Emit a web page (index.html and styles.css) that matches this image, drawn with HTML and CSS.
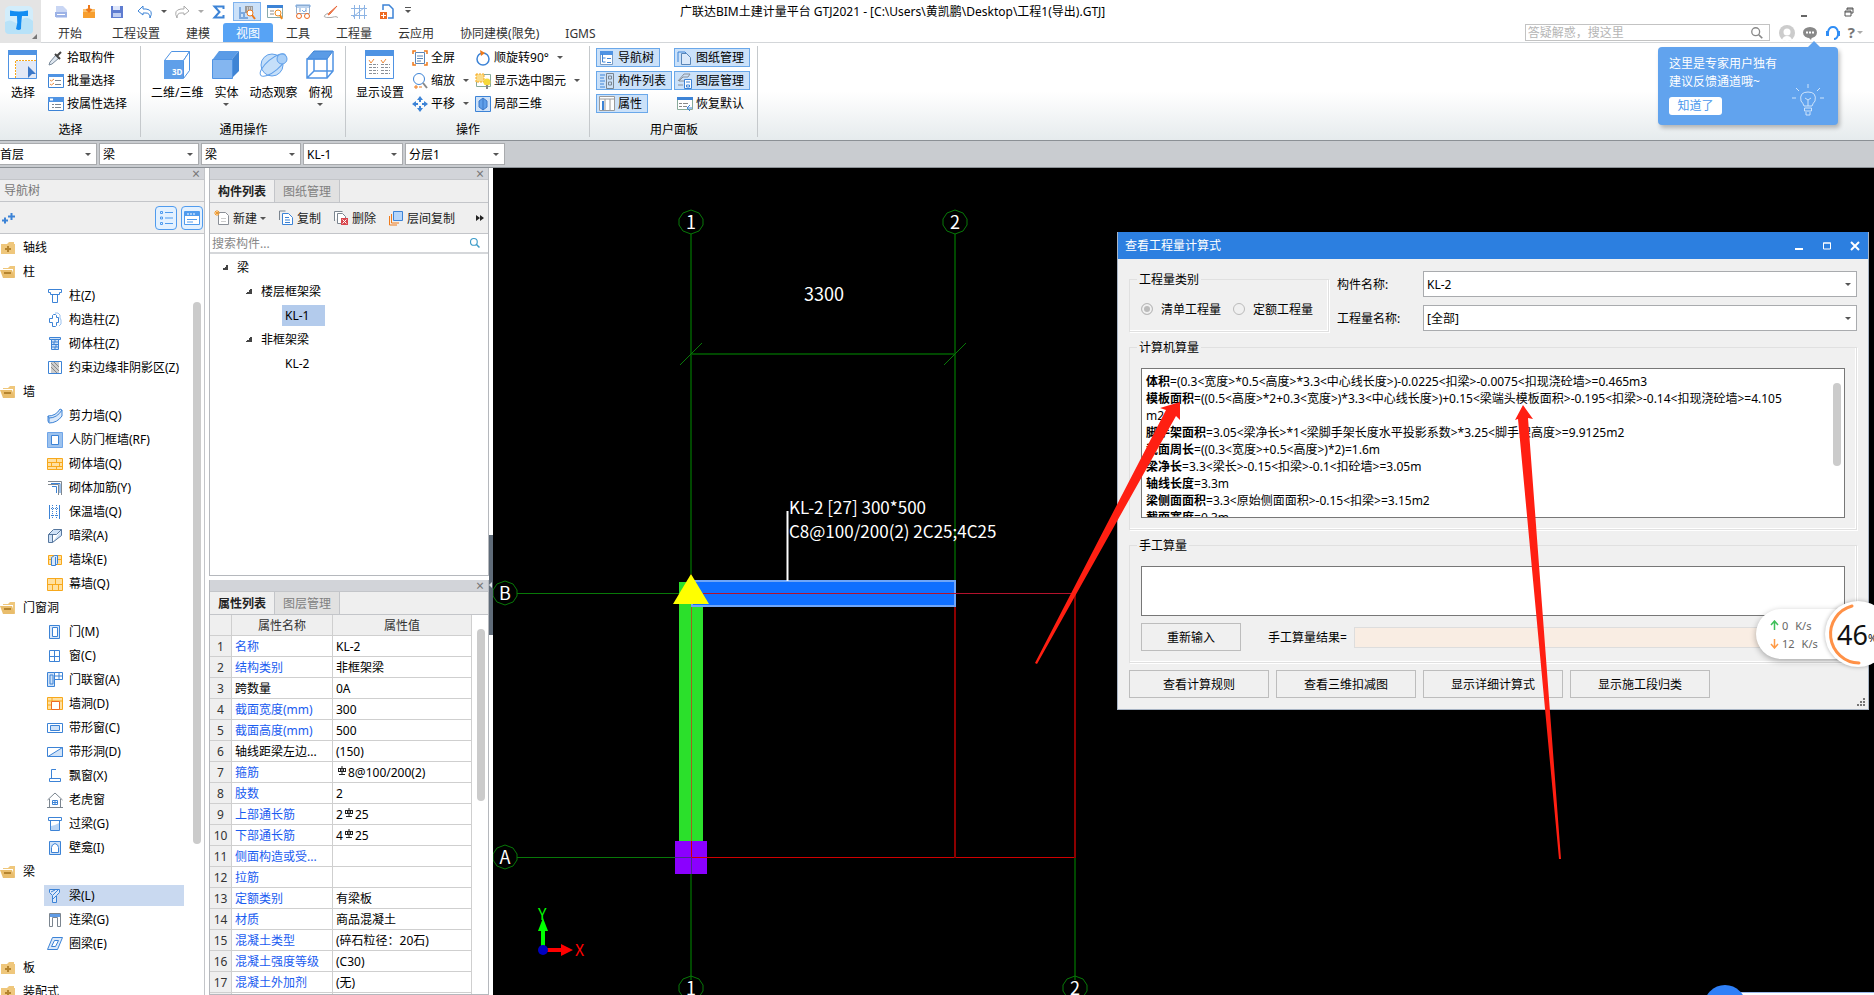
FILE: index.html
```html
<!DOCTYPE html>
<html lang="zh-CN">
  <head>
    <meta charset="UTF-8" />
    <meta name="viewport" content="width=device-width, initial-scale=1.0" />
    <title>广联达BIM土建计量平台 GTJ2021</title>
    <link rel="stylesheet" href="styles.css">
  </head>
  <body>
    <!-- shared icons -->
    <svg class="defs" aria-hidden="true">
      <symbol id="i-plus-folder" viewBox="0 0 16 16"><path d="M1 4h6l2-2h5v2h1v10H1z" fill="#efc77c"/><path d="M5 9h6M8 6v6" stroke="#b5842f" stroke-width="2"/></symbol>
      <symbol id="i-open-folder" viewBox="0 0 16 16"><path d="M3 4h5l2-2h5v11h-2V5H3z" fill="#efc77c"/><path d="M0 6h12l3 8H3z" fill="#e9bd6c"/><path d="M4 9h7" stroke="#b5842f" stroke-width="2"/></symbol>
      <symbol id="i-column" viewBox="0 0 16 16"><path d="M1.500 1.500h13v3h-2v2h-9v-2h-2zM5.500 6.500v8h5v-8" fill="#fff" stroke="#3c83d6"/></symbol>
      <symbol id="i-struct" viewBox="0 0 16 16"><path d="M8 1h3l2 2v3l1 2v4l-2 2" fill="none" stroke="#9cc2ee"/><path d="M5.500 3.500l1-1h2l1 1v2h2v5h-2v3l-1 1h-3v-4h-3v-4h3z" fill="#fff" stroke="#3c83d6"/></symbol>
      <symbol id="i-brickcol" viewBox="0 0 16 16"><path d="M2.500 1.500h11v2h-11z" fill="#cfe2f8" stroke="#3c83d6"/><path d="M4.500 3.500h7v10h-7zM4.500 6h7M4.500 8.500h7M4.500 11h7M8 4v2M7 6v3M9 8v3M8 11v3" fill="#cfe2f8" stroke="#3c83d6"/></symbol>
      <symbol id="i-shade" viewBox="0 0 16 16"><path d="M1.500 1.500h13v12h-13z" fill="#fff" stroke="#3c83d6"/><path d="M4 2h8v11H4z" fill="#ccc"/><path d="M4 3l8 8M4 7l6 6M7 2l5 5" stroke="#888"/></symbol>
      <symbol id="i-curved" viewBox="0 0 16 16"><path d="M1 8q8 0 12-7l2 1v6q-5 7-13 7l-1-2z" fill="#dbe9fa" stroke="#3c83d6"/><path d="M2 10q8 0 13-8M1 8l1 2v4" fill="none" stroke="#3c83d6"/></symbol>
      <symbol id="i-frame" viewBox="0 0 16 16"><path d="M.5.500h15v15H.5z" fill="#9cc2ee" stroke="#6fa5e8"/><path d="M4.500 3.500h7v9h-7z" fill="#fff" stroke="#3c83d6"/></symbol>
      <symbol id="i-brick" viewBox="0 0 16 16"><path d="M.5 2.500h15v11H.5zM0 6.500h16M0 10.500h16M9.500 2v4M4.500 6v4M12.500 6v4M9.500 10v4" fill="#ffe0a0" stroke="#f7a81b"/></symbol>
      <symbol id="i-rebar" viewBox="0 0 16 16"><path d="M1 1.500h13.500V15M1 4.500h10.500V15" fill="none" stroke="#808890"/><path d="M4 3.500h9V13M5 6.500h4.500V13" fill="none" stroke="#3c83d6"/></symbol>
      <symbol id="i-insul" viewBox="0 0 16 16"><path d="M2.500 1v14M12.500 1v14" stroke="#3c83d6"/><path d="M5.500 1v14M9.500 1v14M2 4.500h11M2 11.500h11" stroke="#3c83d6" stroke-dasharray="1 1"/></symbol>
      <symbol id="i-hidbeam" viewBox="0 0 16 16"><path d="M1.500 6.500l5-5h8l-5 5zM1.500 6.500v8h4v-8M5.500 14.500l9-7v-6" fill="#cfe2f8" stroke="#56779e"/></symbol>
      <symbol id="i-pier" viewBox="0 0 16 16"><path d="M1.500 3.500h13v9h-13zM2 7.500h12" fill="#ffe0a0" stroke="#f7a81b"/><path d="M4.500 5.500l3-2h3v8l-2 2h-4zM8.500 5v8" fill="#dbe9fa" stroke="#3c83d6"/></symbol>
      <symbol id="i-curtain" viewBox="0 0 16 16"><path d="M.5 2.500h15v12H.5zM0 8.500h16M8.500 2v6M5.500 8v6M11.500 8v6" fill="#ffe0a0" stroke="#f7a81b"/></symbol>
      <symbol id="i-door" viewBox="0 0 16 16"><path d="M2.500 1.500h10v13h-10z" fill="#dbe9fa" stroke="#3c83d6"/><path d="M5.500 3.500h5v9h-5z" fill="#fff" stroke="#3c83d6"/></symbol>
      <symbol id="i-window" viewBox="0 0 16 16"><path d="M2.500 2.500h10v11h-10zM2 8.500h11M7.500 2v12" fill="#fff" stroke="#3c83d6"/></symbol>
      <symbol id="i-doorwin" viewBox="0 0 16 16"><path d="M.5.500h7v14h-7zM3 3h3v9H3z" fill="#cfe2f8" stroke="#3c83d6"/><path d="M7.500.5h8v7h-8zM8 4h8M12 1v6" fill="#fff" stroke="#3c83d6"/></symbol>
      <symbol id="i-hole" viewBox="0 0 16 16"><path d="M.5 1.500h15v12H.5zM0 5h16M5 2v3M0 9h5" fill="#ffe0a0" stroke="#f7a81b"/><path d="M4.500 5.500h8v8h-8z" fill="#fff" stroke="#ee6a22"/></symbol>
      <symbol id="i-stripwin" viewBox="0 0 16 16"><path d="M.5 3.500h15v9H.5z" fill="#fff" stroke="#3c83d6"/><path d="M3.500 5.500h9v5h-9z" fill="#cfe2f8" stroke="#3c83d6"/></symbol>
      <symbol id="i-striphole" viewBox="0 0 16 16"><path d="M.5 3.500h15v9H.5z" fill="#fff" stroke="#3c83d6"/><path d="M1 12.500h14.500v-9z" fill="#cfe2f8" stroke="#3c83d6"/></symbol>
      <symbol id="i-bay" viewBox="0 0 16 16"><path d="M9 1.500H4.500v9M2.500 10.500h11v3h-11z" fill="none" stroke="#3c83d6"/></symbol>
      <symbol id="i-house" viewBox="0 0 16 16"><path d="M.5 8L8 1l7.500 7M2.500 7v8M13.500 7v8M0 15.500h16" fill="none" stroke="#7b858f"/><path d="M5.500 8.500h5v4h-5zM8 8v5M5 10.500h6" fill="none" stroke="#3c83d6"/></symbol>
      <symbol id="i-lintel" viewBox="0 0 16 16"><path d="M1.500 1.500h13v3h-13zM3.500 4.500v10h9v-10" fill="#fff" stroke="#3c83d6"/><path d="M4 14v-4l4-1 4-2v7z" fill="#b9d4f4"/></symbol>
      <symbol id="i-niche" viewBox="0 0 16 16"><path d="M2.500 1.500h11v13h-11z" fill="#cfe2f8" stroke="#3c83d6"/><path d="M4.500 12.500v-5q0-3 3.500-4 3.500 1 3.500 4v5z" fill="#fff" stroke="#3c83d6"/></symbol>
      <symbol id="i-beam" viewBox="0 0 16 16"><path d="M2.500 1.500h10v3l-3 3v7h-4v-7l-3-3z" fill="#dbe9fa" stroke="#3c83d6"/><path d="M4 4l4-2M6 7l5-5M6 11l3-3" stroke="#3c83d6"/></symbol>
      <symbol id="i-linkbeam" viewBox="0 0 16 16"><path d="M2.500 1.500h11v13h-3v-9h-5v9h-3z" fill="#fff" stroke="#7b858f"/><path d="M3 2h10v3H3z" fill="#5f9be5"/></symbol>
      <symbol id="i-ring" viewBox="0 0 16 16"><path d="M5.500 1.500h10l-5 12H.5z" fill="#dbe9fa" stroke="#3c83d6"/><path d="M7.500 4.500h4l-3 6h-4z" fill="#fff" stroke="#3c83d6"/></symbol>
      <symbol id="i-lens" viewBox="0 0 16 16"><circle cx="6.500" cy="6.500" r="4.500" fill="none" stroke="currentColor" stroke-width="1.500"/><path d="M10 10l4 4" stroke="currentColor" stroke-width="2"/></symbol>
      <symbol id="i-rebarmark" viewBox="0 0 10 10"><path d="M1 2.500h8M1 5.500h8M1.500 2v4M3.500 2v4M6.500 2v4M8.500 2v4M5 0v8M2 8.500h6" fill="none" stroke="#222" stroke-width="1"/></symbol>
      <symbol id="i-list" viewBox="0 0 16 16"><path d="M.5 1.500h15v13H.5z" fill="#fff" stroke="#3c83d6"/><path d="M0 1h16v3H0z" fill="#4f93e3"/><path d="M2 7l1.500 1L6 6M2 11l1.500 1L6 10" fill="none" stroke="#ee8a3a"/><path d="M7 7.500h6M7 11.500h6" stroke="#7b858f"/></symbol>
      <symbol id="i-panel" viewBox="0 0 16 16"><path d="M1.500 1.500h12v13h-12z" fill="#fff" stroke="#7b9cc4"/><path d="M1 1h13v4H1z" fill="#4f93e3"/><path d="M3.500 4v8h3M3.500 8h3M8 8.500h4M8 12.500h4" fill="none" stroke="#3c83d6"/></symbol>
      <symbol id="i-pages" viewBox="0 0 16 16"><path d="M1.500 10v-9h6" fill="none" stroke="#7b858f"/><path d="M4.500 3.500h6l4 4v7h-10z" fill="#fff" stroke="#3c83d6"/><path d="M7 7.500h4M7 10h5M7 12.500h5" stroke="#3c83d6"/></symbol>
    </svg>

    <header class="app-header">
      <button class="logo" aria-label="应用菜单">
        <svg width="36" height="36" viewBox="0 0 36 36"><rect x="2" y="2" width="28" height="28" rx="5" fill="#d2edfb"/><path d="M2 18q5-3 9 0t8-2 11 1v9q0 4-4 4H6q-4 0-4-4z" fill="#b8e2f8"/><path d="M7 6.500q9 2 18 0v5.500h-6q-1 7-1 13-2 2-5 0 2-6 1-13H7z" fill="#148df2"/><path d="M34 30v5h-5z" fill="#777"/></svg>
      </button>
      <div class="title-row">
        <div class="quick">
          <button aria-label="新建文件"><svg width="16" height="16"><path d="M3 2h7l4 4v8H3z" fill="#c9d6f4"/><path d="M2 8h12v5H2z" fill="#9cb2e6"/><path d="M4 10.500h8" stroke="#fff"/></svg></button>
          <button aria-label="打开"><svg width="16" height="16"><path d="M2 5h12v9H2z" fill="#f79e2e"/><path d="M2 5h3l1 2h4l1-2h3v3H2z" fill="#fbc16d"/><path d="M8 1v6M5.500 5L8 7.500 10.500 5" stroke="#ee7a1b" fill="none" stroke-width="2"/></svg></button>
          <button aria-label="保存"><svg width="16" height="16"><path d="M2 2h12v12H2z" fill="#5f7cd0"/><path d="M4 2h7v4H4z" fill="#dfe7fa"/><path d="M4 9h8v4H4z" fill="#c0cef2"/></svg></button>
          <button aria-label="撤销"><svg width="16" height="16"><path d="M6 2L1 7l5 4V9h3q4 0 4 5 4-8-4-9H6z" fill="#fff" stroke="#3c83d6"/></svg></button>
          <button class="more" aria-label="撤销记录"><i class="caret"></i></button>
          <button aria-label="重做"><svg width="16" height="16"><path d="M10 2l5 5-5 4V9H7q-4 0-4 5-4-8 4-9h3z" fill="#fff" stroke="#aaa"/></svg></button>
          <button class="more" aria-label="重做记录"><i class="caret pale"></i></button>
          <button aria-label="汇总计算"><svg width="16" height="16"><path d="M12.500 5V2.500h-9L8.500 8l-5 5.500h9V11" fill="none" stroke="#3c83d6" stroke-width="2"/></svg></button>
          <button class="on" aria-label="查看工程量"><svg width="18" height="16"><path d="M2 3v11h8M2 9h4v4" fill="none" stroke="#7ba8de" stroke-width="2"/><path d="M7 2h8v7H7z" fill="#999"/><path d="M9 4h5M9 6h5" stroke="#fff" stroke-dasharray="1 1"/><circle cx="12" cy="9" r="3" fill="#fff" stroke="#ee7a1b"/><path d="M14 11l3 4" stroke="#ee7a1b" stroke-width="2"/></svg></button>
          <button aria-label="查看计算式"><svg width="16" height="16"><path d="M.5 1.500h15v12H.5z" fill="#fff" stroke="#8aa"/><path d="M0 1h16v3H0z" fill="#3c83d6"/><path d="M3 7h4M3 10h4" stroke="#888"/><circle cx="11" cy="9" r="3" fill="#fff" stroke="#ee8a1b"/><path d="M13 11l2 4" stroke="#ee8a1b" stroke-width="2"/></svg></button>
          <button aria-label="查看钢筋"><svg width="16" height="16"><path d="M1.500 1.500h13v8h-13z" fill="#fff" stroke="#9ab0c8"/><path d="M1 1h14v2H1zM5 4v4M11 4v4M7 6l2 2 2-2" fill="none" stroke="#7ba8de"/><circle cx="4" cy="12" r="2.500" fill="none" stroke="#ee6a22"/><circle cx="12" cy="12" r="2.500" fill="none" stroke="#ee6a22"/></svg></button>
          <button aria-label="编辑"><svg width="16" height="16"><path d="M14 2L7 10l-2 1 1-2z" fill="#f08a5a" stroke="#e8683a"/><path d="M5 9q-9 5 3 4.500 8-2 6 .5" fill="none" stroke="#aaa"/></svg></button>
          <button aria-label="轴网"><svg width="16" height="16"><path d="M3.500 1v14M8.500 1v14M13.500 1v14M0 4.500h16M0 11.500h16M2 13L14 3" stroke="#8db4e4" fill="none"/></svg></button>
          <button aria-label="导出"><svg width="16" height="16"><path d="M4 6V1h6l4 4v9H9" fill="none" stroke="#3c83d6" stroke-width="1.500"/><path d="M1 8h7v7H1z" fill="#ee6a22"/><path d="M2 11.500h5M4.500 9v5" stroke="#fff"/></svg></button>
          <button class="more wide" aria-label="自定义快速访问"><i class="caret barred"></i></button>
        </div>
        <h1>广联达BIM土建计量平台 GTJ2021 - [C:\Users\黄凯鹏\Desktop\工程1(导出).GTJ]</h1>
        <div class="win-btns">
          <button aria-label="最小化"><svg width="8" height="12"><path d="M1 10h6" stroke="#666" stroke-width="2"/></svg></button>
          <button aria-label="还原"><svg width="10" height="12"><path d="M3 4V2h6v5H7M1 5h6v5H1zM1 6h6M3 3h6" fill="none" stroke="#555"/></svg></button>
        </div>
      </div>
      <nav class="tab-row">
        <a href="#start" class="first">开始</a>
        <a href="#settings">工程设置</a>
        <a href="#model">建模</a>
        <a href="#view" class="active">视图</a>
        <a href="#tools">工具</a>
        <a href="#quantity">工程量</a>
        <a href="#cloud">云应用</a>
        <a href="#team">协同建模(限免)</a>
        <a href="#igms">IGMS</a>
        <div class="help">
          <label class="help-search"><input type="text" aria-label="搜索" placeholder="答疑解惑，搜这里"><svg width="14" height="14"><use href="#i-lens"/></svg></label>
          <button aria-label="用户"><svg width="16" height="16"><circle cx="8" cy="8" r="8" fill="#ccc"/><circle cx="8" cy="7" r="3.500" fill="#fff"/><path d="M3 15q1-4 5-4t5 4q-5 2-10 0z" fill="#fff"/></svg></button>
          <button aria-label="反馈"><svg width="16" height="16"><ellipse cx="8" cy="7.500" rx="7" ry="5.500" fill="#888"/><path d="M6 12l3 3 1-3z" fill="#888"/><path d="M4 7.500h8" stroke="#fff" stroke-width="2" stroke-dasharray="2 1"/></svg></button>
          <button aria-label="客服"><svg width="16" height="16"><path d="M3 9V7q1-5 5-5t5 5v3q-1 4-4 4" fill="none" stroke="#2f8df5" stroke-width="2"/><path d="M1 6h3v5H1zM12 6h3v5h-3z" fill="#2f8df5"/></svg></button>
          <button class="q" aria-label="帮助">?<i class="caret pale"></i></button>
        </div>
      </nav>
    </header>

    <section class="ribbon">
      <div class="group g-select">
        <div class="group-body">
          <button class="big"><svg width="30" height="30"><path d="M.5.500h28v28H.5z" fill="#fff" stroke="#4f93e3"/><path d="M0 0h29v5H0z" fill="#4f93e3"/><path d="M8 11h20v17H8z" fill="#e3e9f6"/><path d="M7.500 28V10.500H28" fill="none" stroke="#f7a81b" stroke-dasharray="2 1"/><path d="M20 16l8 8h-4l-4 4z" fill="#3c78c8"/></svg><span>选择</span></button>
          <div class="col">
            <button><svg width="16" height="16"><path d="M8 5l3 3-7 6-3 1 1-3z" fill="#dfe7f0" stroke="#789"/><path d="M7 4l5 5M9 6l4-4" stroke="#444" stroke-width="2"/></svg>拾取构件</button>
            <button><svg width="16" height="16"><use href="#i-list"/></svg>批量选择</button>
            <button><svg width="16" height="16"><path d="M.5 1.500h15v13H.5z" fill="#fff" stroke="#3c83d6"/><path d="M0 1h16v5H0z" fill="#4f93e3"/><path d="M2 3.500h3" stroke="#fff" stroke-width="2"/><path d="M4 8.500h2M4 11.500h2M7 8.500h6M7 11.500h6" stroke="#7b858f"/></svg>按属性选择</button>
          </div>
        </div>
        <p>选择</p>
      </div>
      <div class="group g-common">
        <div class="group-body">
          <button class="big"><svg width="30" height="30"><path d="M2.500 10.500l7-9h18l-6 9z" fill="#fff" stroke="#4f93e3"/><path d="M21.500 10.500l6-9v19l-6 8z" fill="#fff" stroke="#4f93e3"/><path d="M2 10h19v19H2z" fill="#5f9fe9"/><text x="10" y="25" class="cube-text">3D</text></svg><span>二维/三维</span></button>
          <button class="big"><svg width="30" height="30"><path d="M2 9l6-8h20l-7 8z" fill="#5a9be6"/><path d="M21 9l7-8v20l-7 7z" fill="#3f84d4"/><path d="M1.500 9.500h20v19h-20z" fill="#84b6f0" stroke="#4f93e3"/></svg><span>实体</span><i class="caret"></i></button>
          <button class="big"><svg width="30" height="30"><circle cx="14" cy="15" r="11" fill="#c5dff9" stroke="#5f9fe9"/><ellipse cx="15" cy="15" rx="16" ry="6" transform="rotate(-40 15 15)" fill="none" stroke="#5f9fe9"/><circle cx="24" cy="9" r="5" fill="#a9cff7" stroke="#5f9fe9"/></svg><span>动态观察</span></button>
          <button class="big"><svg width="30" height="30"><path d="M2 9l7-8h19l-6 8z" fill="#5a9be6" stroke="#3f84d4"/><path d="M2 9h20v19H2zM22 28l6-7V1M9 9v12h13M2 28l7-7M22 21h6" fill="none" stroke="#4f93e3" stroke-width="1.500"/></svg><span>俯视</span><i class="caret"></i></button>
        </div>
        <p>通用操作</p>
      </div>
      <div class="group g-ops">
        <div class="group-body">
          <button class="big"><svg width="30" height="30"><path d="M.5.500h28v28H.5z" fill="#fff" stroke="#4f93e3"/><path d="M0 0h29v6H0z" fill="#4f93e3"/><path d="M4 10l2 3 3-4M16 10l2 3 3-4" fill="none" stroke="#ee8a3a"/><path d="M4 14.500h9M4 17.500h9M4 20.500h9M4 23.500h9M16 14.500h9M16 17.500h9M16 20.500h9M16 23.500h9" stroke="#8a8f96" stroke-dasharray="3 1"/></svg><span>显示设置</span></button>
          <div class="col c2">
            <button><svg width="16" height="16"><path d="M1 4V1h3M12 1h3v3M15 12v3h-3M4 15H1v-3" fill="none" stroke="#ee7a1b" stroke-width="1.500"/><path d="M3.500 2.500h9v11h-9zM5 6h6M5 8.500h6M5 11h4" fill="#fff" stroke="#5a86b8"/></svg>全屏</button>
            <button><svg width="16" height="16"><circle cx="7" cy="6" r="5.500" fill="#fff" stroke="#3c83d6"/><path d="M11 10l4 5" stroke="#888" stroke-width="2"/><path d="M2 14h4M4 12v4M7 14h3" stroke="#ee7a1b"/></svg>缩放<i class="caret"></i></button>
            <button><svg width="16" height="16"><path d="M8 0l3 4H5zM8 16l3-4H5zM0 8l4-3v6zM16 8l-4-3v6z" fill="#3c83d6"/><path d="M8 3v10M3 8h10" stroke="#3c83d6" stroke-width="2" stroke-dasharray="3 4"/></svg>平移<i class="caret"></i></button>
          </div>
          <div class="col c3">
            <button><svg width="16" height="16"><circle cx="8" cy="9" r="6" fill="none" stroke="#3c83d6" stroke-width="1.500"/><path d="M5 0l5 3-4 3z" fill="#ee7a1b"/></svg>顺旋转90°<i class="caret"></i></button>
            <button><svg width="16" height="16"><path d="M1.500 1.500h14v12h-14z" fill="#fff" stroke="#8a9"/><path d="M1 1h8v8H1z" fill="#fbdc8a" stroke="#f7a81b" stroke-dasharray="2 1"/><circle cx="12" cy="9" r="3.500" fill="#f6d93a"/><path d="M12 12v4" stroke="#888" stroke-width="2"/></svg>显示选中图元<i class="caret"></i></button>
            <button><svg width="16" height="16"><path d="M.5.500h15v15H.5z" fill="#cfe2f8" stroke="#3c83d6"/><path d="M8 2l4 3v6l-4 3-4-3V5zM8 2v12" fill="#5f9fe9" stroke="#3c78c8"/></svg>局部三维</button>
          </div>
        </div>
        <p>操作</p>
      </div>
      <div class="group g-panels">
        <div class="group-body">
          <div class="toggles">
            <button class="on"><svg width="16" height="16"><use href="#i-panel"/></svg>导航树</button>
            <button class="on"><svg width="16" height="16"><path d="M1 2h5M1 5h4M1 8h5M1 11h4M1 14h5" stroke="#3c83d6"/><path d="M7.500.500h7v15h-7zM9.500 3h3v3h-3zM9.500 9h3v3h-3z" fill="none" stroke="#7b858f"/></svg>构件列表</button>
            <button class="on"><svg width="16" height="16"><path d="M.5.500h15v14H.5zM0 3h16M6 3v12M11 3v12" fill="#fff" stroke="#9a9a9a"/><path d="M3 5h2v9H3z" fill="#3c83d6"/></svg>属性</button>
          </div>
          <div class="toggles">
            <button class="on"><svg width="16" height="16"><path d="M1 12V2h7l2 2" fill="none" stroke="#3c83d6"/><path d="M4.500 3.500h5l4 4v7h-9z" fill="#dbe9fa" stroke="#5a86b8"/></svg>图纸管理</button>
            <button class="on"><svg width="16" height="16"><path d="M1 8l6-7h6l-2 3H6L2 8h5M1 12h5" fill="none" stroke="#8a9099"/><path d="M7.500 6.500h7v9h-7zM9 9h4M9.500 12h3v2h-3z" fill="#fff" stroke="#3c83d6"/></svg>图层管理</button>
            <button><svg width="16" height="16"><path d="M.5 1.500h15v12H.5z" fill="#fff" stroke="#8a9"/><path d="M0 1h16v3H0z" fill="#3c83d6"/><path d="M2 7.500h3M2 10.500h3M6 7.500h5M6 10.500h4" stroke="#888"/><path d="M10 12h5M10 12l3-3M10 12l3 3" stroke="#3c83d6" fill="none"/></svg>恢复默认</button>
          </div>
        </div>
        <p>用户面板</p>
      </div>
    </section>

    <aside class="tip">
      <p>这里是专家用户独有<br>建议反馈通道哦~</p>
      <button>知道了</button>
      <svg width="34" height="34"><path d="M13 23q-1-3-3-5-2-9 7-9t7 9q-2 2-3 5zM13.500 25h7v3h-7zM15 29v3h4v-3M14 15l3 2 3-2M17 17v6M17 1v4M5 5l3 3M29 5l-3 3M1 15h4M29 15h4" fill="none" stroke="#cfe4fb"/></svg>
    </aside>

    <div class="selectors">
      <select aria-label="楼层"><option>首层</option></select>
      <select aria-label="构件大类"><option>梁</option></select>
      <select aria-label="构件类型"><option>梁</option></select>
      <select aria-label="构件"><option>KL-1</option></select>
      <select aria-label="分层"><option>分层1</option></select>
    </div>

    <main>
      <section class="nav-panel">
        <div class="grip"><button aria-label="关闭">×</button></div>
        <h2>导航树</h2>
        <div class="nav-tools">
          <button class="add" aria-label="添加"><svg width="13" height="12"><path d="M0 8.500h6M3 5.500v6M6 4.500h7M9.500 1v7" stroke="#3c83d6" stroke-width="2"/></svg></button>
          <button class="framed" aria-label="列表显示"><svg width="14" height="14"><path d="M1.500.500h2v2h-2zM1.500 6h2v2h-2zM1.500 11.500h2v2h-2zM6 1.500h8M6 7h8M6 12.500h8" fill="none" stroke="#4f9bee"/></svg></button>
          <button class="framed" aria-label="图标显示"><svg width="16" height="14"><path d="M.5.500h15v13H.5z" fill="#fff" stroke="#4f9bee"/><path d="M1 1h14v4H1z" fill="#4f9bee"/><path d="M3 8.500h10M3 11h6" stroke="#4f9bee"/><path d="M3 3h8" stroke="#fff" stroke-dasharray="2 1"/></svg></button>
        </div>
        <div class="nav-scroll">
          <ul class="nav-tree">
            <li class="cat"><svg><use href="#i-plus-folder"/></svg>轴线</li>
            <li class="cat"><svg><use href="#i-open-folder"/></svg>柱</li>
            <li><svg><use href="#i-column"/></svg>柱(Z)</li>
            <li><svg><use href="#i-struct"/></svg>构造柱(Z)</li>
            <li><svg><use href="#i-brickcol"/></svg>砌体柱(Z)</li>
            <li><svg><use href="#i-shade"/></svg>约束边缘非阴影区(Z)</li>
            <li class="cat"><svg><use href="#i-open-folder"/></svg>墙</li>
            <li><svg><use href="#i-curved"/></svg>剪力墙(Q)</li>
            <li><svg><use href="#i-frame"/></svg>人防门框墙(RF)</li>
            <li><svg><use href="#i-brick"/></svg>砌体墙(Q)</li>
            <li><svg><use href="#i-rebar"/></svg>砌体加筋(Y)</li>
            <li><svg><use href="#i-insul"/></svg>保温墙(Q)</li>
            <li><svg><use href="#i-hidbeam"/></svg>暗梁(A)</li>
            <li><svg><use href="#i-pier"/></svg>墙垛(E)</li>
            <li><svg><use href="#i-curtain"/></svg>幕墙(Q)</li>
            <li class="cat"><svg><use href="#i-open-folder"/></svg>门窗洞</li>
            <li><svg><use href="#i-door"/></svg>门(M)</li>
            <li><svg><use href="#i-window"/></svg>窗(C)</li>
            <li><svg><use href="#i-doorwin"/></svg>门联窗(A)</li>
            <li><svg><use href="#i-hole"/></svg>墙洞(D)</li>
            <li><svg><use href="#i-stripwin"/></svg>带形窗(C)</li>
            <li><svg><use href="#i-striphole"/></svg>带形洞(D)</li>
            <li><svg><use href="#i-bay"/></svg>飘窗(X)</li>
            <li><svg><use href="#i-house"/></svg>老虎窗</li>
            <li><svg><use href="#i-lintel"/></svg>过梁(G)</li>
            <li><svg><use href="#i-niche"/></svg>壁龛(I)</li>
            <li class="cat"><svg><use href="#i-open-folder"/></svg>梁</li>
            <li class="selected"><svg><use href="#i-beam"/></svg>梁(L)</li>
            <li><svg><use href="#i-linkbeam"/></svg>连梁(G)</li>
            <li><svg><use href="#i-ring"/></svg>圈梁(E)</li>
            <li class="cat"><svg><use href="#i-plus-folder"/></svg>板</li>
            <li class="cat"><svg><use href="#i-plus-folder"/></svg>装配式</li>
          </ul>
          <span class="thumb"></span>
        </div>
      </section>

      <div class="side">
        <section class="box components">
          <div class="grip"><button aria-label="关闭">×</button></div>
          <div class="panel-tabs"><button class="active">构件列表</button><button>图纸管理</button></div>
          <div class="tools">
            <button><svg width="16" height="16"><path d="M4.500 2.500h7l3 3v9h-10z" fill="#fff" stroke="#8a8f96"/><path d="M7 8.500h5M7 11.500h5" stroke="#ccc"/><path d="M3 0v6M0 3h6M1 1l4 4M5 1L1 5" stroke="#f39a2a"/></svg>新建<i class="caret"></i></button>
            <button><svg width="16" height="16"><use href="#i-pages"/></svg>复制</button>
            <button><svg width="16" height="16"><path d="M1.500 11V1.500h8M4.500 3.500h5l3 3v7h-8z" fill="#fff" stroke="#7b858f"/><path d="M8 8h7v7H8z" fill="#d9484e"/><path d="M9.500 9.500l4 4M13.500 9.500l-4 4" stroke="#fff"/></svg>删除</button>
            <button><svg width="16" height="16"><path d="M1.500 6v9H9M3.500 4v9H11" fill="none" stroke="#ee7a1b"/><path d="M5.500 1.500h9v9h-9z" fill="#b5d6fb" stroke="#3c83d6"/></svg>层间复制</button>
            <button class="overflow" aria-label="更多"><svg width="8" height="8"><path d="M0 1l4 3-4 3zM4 1l4 3-4 3z" fill="#222"/></svg></button>
          </div>
          <label class="find"><input type="text" aria-label="搜索构件" placeholder="搜索构件..."><svg width="12" height="12"><use href="#i-lens"/></svg></label>
          <ul class="comp-tree">
            <li class="l1"><i></i>梁</li>
            <li class="l2"><i></i>楼层框架梁</li>
            <li class="l3"><span class="picked">KL-1</span></li>
            <li class="l2"><i></i>非框架梁</li>
            <li class="l3"><span>KL-2</span></li>
          </ul>
        </section>

        <section class="box props">
          <div class="grip"><button aria-label="关闭">×</button></div>
          <div class="panel-tabs"><button class="active">属性列表</button><button>图层管理</button></div>
          <div class="prop-scroll">
            <table>
              <thead><tr><th></th><th>属性名称</th><th>属性值</th></tr></thead>
              <tbody>
                <tr><td>1</td><td>名称</td><td>KL-2</td></tr>
                <tr><td>2</td><td>结构类别</td><td>非框架梁</td></tr>
                <tr><td>3</td><td class="dark">跨数量</td><td>0A</td></tr>
                <tr><td>4</td><td>截面宽度(mm)</td><td>300</td></tr>
                <tr><td>5</td><td>截面高度(mm)</td><td>500</td></tr>
                <tr><td>6</td><td class="dark">轴线距梁左边...</td><td>(150)</td></tr>
                <tr><td>7</td><td>箍筋</td><td><svg><use href="#i-rebarmark"/></svg>8@100/200(2)</td></tr>
                <tr><td>8</td><td>肢数</td><td>2</td></tr>
                <tr><td>9</td><td>上部通长筋</td><td>2<svg><use href="#i-rebarmark"/></svg>25</td></tr>
                <tr><td>10</td><td>下部通长筋</td><td>4<svg><use href="#i-rebarmark"/></svg>25</td></tr>
                <tr><td>11</td><td>侧面构造或受...</td><td></td></tr>
                <tr><td>12</td><td>拉筋</td><td></td></tr>
                <tr><td>13</td><td>定额类别</td><td>有梁板</td></tr>
                <tr><td>14</td><td>材质</td><td>商品混凝土</td></tr>
                <tr><td>15</td><td>混凝土类型</td><td>(碎石粒径：20石)</td></tr>
                <tr><td>16</td><td>混凝土强度等级</td><td>(C30)</td></tr>
                <tr><td>17</td><td>混凝土外加剂</td><td>(无)</td></tr>
                <tr><td></td><td></td><td></td></tr>
              </tbody>
            </table>
            <span class="thumb"></span>
          </div>
        </section>
      </div>

      <div class="splitter"><button aria-label="收起"><i></i></button></div>

      <section class="canvas">
        <svg class="drawing" width="1381" height="827">
          <g class="axis">
            <path d="M198 66v340M462 66v346M198 186h264M198 705v107M582 690v122"/>
          </g>
          <g class="axis-thin">
            <path d="M24 425.500h163M24 689.500h159M187 197l22-22M451 197l22-22"/>
            <path id="bubble" d="M198 42l8 3 4 6v6l-4 6-8 3-8-3-4-6v-6l4-6z"/>
            <use href="#bubble" x="264"/>
            <use href="#bubble" x="-186" y="371"/>
            <use href="#bubble" x="-186" y="635"/>
            <use href="#bubble" y="766"/>
            <use href="#bubble" x="384" y="766"/>
          </g>
          <rect x="186" y="414" width="24" height="260" fill="#2be02b"/>
          <path d="M198.500 436v238" stroke="#a0641e"/>
          <rect x="199" y="413" width="263" height="25" fill="#0f6fff" stroke="#6fa5f7" stroke-width="2"/>
          <path d="M210 425.500h372" stroke="#b4122c" stroke-width="1"/>
          <path d="M180 436l18-30 18 30z" fill="#ff0"/>
          <rect x="182" y="673" width="32" height="33" fill="#8b00ff"/>
          <path d="M198.500 673v16.500H582" fill="none" stroke="#d00000"/>
          <path d="M182 689.500h16.500V706" fill="none" stroke="#4a2a8a"/>
          <path d="M462 439v251M582 425v265" stroke="#8c0000" stroke-width="2"/>
          <path d="M294.500 343v70" stroke="#fff" stroke-width="2"/>
          <g class="label">
            <text x="331" y="133" text-anchor="middle">3300</text>
            <text class="note" x="296" y="346">KL-2 [27] 300*500</text>
            <text class="note" x="296" y="370">C8@100/200(2) 2C25;4C25</text>
            <text x="198" y="61" text-anchor="middle">1</text>
            <text x="462" y="61" text-anchor="middle">2</text>
            <text x="12" y="432" text-anchor="middle">B</text>
            <text x="12" y="696" text-anchor="middle">A</text>
            <text x="198" y="827" text-anchor="middle">1</text>
            <text x="582" y="827" text-anchor="middle">2</text>
          </g>
          <path d="M50 782v-24" stroke="#0f0" stroke-width="4"/><path d="M45 763l5-13 5 13z" fill="#0f0"/>
          <path d="M50 782h20" stroke="red" stroke-width="4"/><path d="M68 776l12 6-12 6z" fill="red"/>
          <circle cx="50" cy="782" r="5" fill="#0000c0"/>
          <g class="axis-name"><text x="45" y="752" fill="#0f0">Y</text><text x="82" y="788" fill="red">X</text></g>
        </svg>

        <div class="dialog" role="dialog" aria-label="查看工程量计算式">
          <div class="dialog-title">
            <h2>查看工程量计算式</h2>
            <button aria-label="最小化"><svg width="10" height="10"><path d="M1 8h8" stroke="#fff" stroke-width="2"/></svg></button>
            <button aria-label="最大化"><svg width="10" height="10"><path d="M1.500 2h7v6h-7zM1 2h8" fill="none" stroke="#fff"/></svg></button>
            <button aria-label="关闭"><svg width="10" height="10"><path d="M1 1l8 8M9 1L1 9" stroke="#fff" stroke-width="2"/></svg></button>
          </div>
          <div class="dialog-body">
            <div class="top-row">
              <fieldset class="kind">
                <legend>工程量类别</legend>
                <label><input type="radio" name="kind" checked disabled>清单工程量</label>
                <label><input type="radio" name="kind" disabled>定额工程量</label>
              </fieldset>
              <div class="names">
                <label for="comp-name">构件名称:</label>
                <select id="comp-name"><option>KL-2</option></select>
                <label for="qty-name">工程量名称:</label>
                <select id="qty-name"><option>[全部]</option></select>
              </div>
            </div>
            <fieldset class="machine">
              <legend>计算机算量</legend>
              <div class="formulas">
                <p><b>体积</b>=(0.3&lt;宽度&gt;*0.5&lt;高度&gt;*3.3&lt;中心线长度&gt;)-0.0225&lt;扣梁&gt;-0.0075&lt;扣现浇砼墙&gt;=0.465m3</p>
                <p><b>模板面积</b>=((0.5&lt;高度&gt;*2+0.3&lt;宽度&gt;)*3.3&lt;中心线长度&gt;)+0.15&lt;梁端头模板面积&gt;-0.195&lt;扣梁&gt;-0.14&lt;扣现浇砼墙&gt;=4.105<br>m2</p>
                <p><b>脚手架面积</b>=3.05&lt;梁净长&gt;*1&lt;梁脚手架长度水平投影系数&gt;*3.25&lt;脚手架高度&gt;=9.9125m2</p>
                <p><b>截面周长</b>=((0.3&lt;宽度&gt;+0.5&lt;高度&gt;)*2)=1.6m</p>
                <p><b>梁净长</b>=3.3&lt;梁长&gt;-0.15&lt;扣梁&gt;-0.1&lt;扣砼墙&gt;=3.05m</p>
                <p><b>轴线长度</b>=3.3m</p>
                <p><b>梁侧面面积</b>=3.3&lt;原始侧面面积&gt;-0.15&lt;扣梁&gt;=3.15m2</p>
                <p><b>截面宽度</b>=0.3m</p>
                <span class="thumb"></span>
              </div>
            </fieldset>
            <fieldset class="manual">
              <legend>手工算量</legend>
              <textarea aria-label="手工算量"></textarea>
              <div class="result">
                <button>重新输入</button>
                <label for="result">手工算量结果=</label>
                <input id="result" type="text" readonly>
              </div>
            </fieldset>
            <div class="actions">
              <button>查看计算规则</button>
              <button>查看三维扣减图</button>
              <button>显示详细计算式</button>
              <button>显示施工段归类</button>
            </div>
            <svg class="size-grip" width="10" height="10"><path d="M6 1h2v2H6zM6 4h2v2H6zM3 4h2v2H3zM6 7h2v2H6zM3 7h2v2H3zM0 7h2v2H0z" fill="#777"/></svg>
          </div>
        </div>

        <svg class="marks" width="1381" height="827">
          <path d="M542 495l131-253-6-2 20-6v18l-4-4L544 496z" fill="#ff1f12"/>
          <path d="M1066 691l-41-440-3 1 8-15 10 14-5-1 33 441z" fill="#ff1f12"/>
        </svg>

        <div class="speed">
          <p><svg width="9" height="11"><path d="M4.500 10V1M1 5l3.500-4L8 5" fill="none" stroke="#3fbf5a" stroke-width="1.500"/></svg>0 <span>K/s</span></p>
          <p><svg width="9" height="11"><path d="M4.500 1v9M1 6l3.500 4L8 6" fill="none" stroke="#ff9a45" stroke-width="1.500"/></svg>12 <span>K/s</span></p>
          <div class="dial"><svg width="66" height="66"><path d="M27 5a29 29 0 0 0 7 57" fill="none" stroke="#ff9147" stroke-width="3" stroke-linecap="round"/></svg><strong>46</strong><small>%</small></div>
        </div>
        <div class="dock"><span></span></div>
      </section>
    </main>
  </body>
</html>
```
FILE: styles.css
```css
* {
  box-sizing: border-box;
}

body {
  margin: 0;
  height: 100vh;
  display: flex;
  flex-direction: column;
  overflow: hidden;
  position: relative;
  background: #fff;
  color: #000;
  font-family: "Noto Sans", "Noto Sans CJK SC", sans-serif;
  font-size: 12px;
  line-height: 17px;
}

h1, h2, p, ul {
  margin: 0;
  padding: 0;
  font-size: 12px;
  font-weight: normal;
}

ul {
  list-style: none;
}

button, input, select, textarea {
  font: inherit;
  color: inherit;
  margin: 0;
  padding: 0;
  border: none;
  background: none;
  outline: none;
}

button {
  white-space: nowrap;
}

svg {
  flex: none;
  display: block;
}

.defs {
  position: absolute;
  width: 0;
  height: 0;
}

.caret {
  flex: none;
  border: 3px solid transparent;
  border-top-color: #555;
  border-bottom: none;
}

.caret.pale {
  border-top-color: #aaa;
}

.caret.barred {
  position: relative;
}

.caret.barred::before {
  content: "";
  position: absolute;
  left: -3px;
  top: -6px;
  width: 6px;
  border-top: 1px solid #555;
}

select {
  appearance: none;
  background: #fff url("data:image/svg+xml,%3Csvg xmlns='http://www.w3.org/2000/svg' width='6' height='3'%3E%3Cpath d='M0 0h6L3 3z' fill='%23555'/%3E%3C/svg%3E") no-repeat right 5px center;
  border: 1px solid #a9abae;
  border-radius: 0;
}

/* header */
.app-header {
  display: grid;
  grid-template-columns: 41px 1fr;
  grid-template-rows: 23px 20px;
}

.logo {
  grid-row: 1 / 3;
  background: #e4e4e4;
  display: flex;
  align-items: center;
  justify-content: center;
}

.title-row {
  display: flex;
}

.title-row h1 {
  line-height: 24px;
  white-space: nowrap;
}

.quick {
  display: flex;
  width: 639px;
  padding: 2px 0 2px 6px;
}

.quick button {
  width: 28px;
  display: flex;
  align-items: center;
  justify-content: center;
}

.quick .more {
  width: 9px;
}

.quick .wide {
  width: 14px;
}

.quick .on {
  background: #cbe1f9;
  border: 1px solid #7fb3ee;
}

.win-btns {
  margin-left: auto;
  display: flex;
  gap: 36px;
  padding-right: 20px;
}

.tab-row {
  display: flex;
  border-bottom: 1px solid #d3d6d9;
}

.tab-row a {
  padding: 0 13px;
  line-height: 21px;
  color: #333;
  text-decoration: none;
  white-space: nowrap;
}

.tab-row .first {
  padding: 0 17px;
}

.tab-row .active {
  background: #57a3f5;
  color: #fff;
  border-radius: 3px 3px 0 0;
}

.help {
  margin-left: auto;
  padding-right: 11px;
  display: flex;
  align-items: center;
  gap: 7px;
}

.help-search {
  width: 245px;
  height: 17px;
  margin-right: 2px;
  padding: 0 5px 0 2px;
  border: 1px solid #c3c3c3;
  display: flex;
  align-items: center;
  color: #888;
}

.help-search input {
  flex: 1;
  line-height: 15px;
}

input::placeholder {
  color: #b5b5b5;
}

.help .q {
  display: flex;
  align-items: center;
  gap: 2px;
  font-size: 15px;
  font-weight: bold;
  color: #777;
}

/* ribbon */
.ribbon {
  height: 98px;
  display: flex;
  background: linear-gradient(#fff 50%, #e6ebed);
  border-bottom: 1px solid #8b9095;
}

.group {
  display: flex;
  flex-direction: column;
  position: relative;
  padding-top: 3px;
}

.group::after {
  content: "";
  position: absolute;
  right: 0;
  top: 3px;
  bottom: 3px;
  border-right: 1px solid #c5c9cc;
}

.group p {
  text-align: center;
  line-height: 21px;
}

.group-body {
  flex: 1;
  display: flex;
  padding-left: 10px;
}

.g-select { width: 141px; }
.g-common { width: 205px; }
.g-ops { width: 244px; }
.g-panels { width: 168px; }

.g-select .group-body {
  padding-left: 8px;
}

.g-panels .group-body {
  padding-left: 6px;
}

.big {
  display: flex;
  flex-direction: column;
  align-items: center;
  padding-top: 4px;
}

.big span {
  margin: 4px 0 2px;
}

.g-select .big {
  width: 30px;
}

.g-common .group-body {
  gap: 8px;
}

.cube-text {
  font-size: 8px;
  font-weight: bold;
  fill: #fff;
}

.col {
  display: flex;
  flex-direction: column;
  padding-left: 10px;
}

.col button {
  height: 23px;
  display: flex;
  align-items: center;
  gap: 3px;
}

.col .caret {
  margin-left: 5px;
}

.c2 {
  padding-left: 8px;
}

.c3 {
  padding-left: 6px;
}

.toggles {
  display: flex;
  flex-direction: column;
  align-items: flex-start;
  gap: 4px;
  padding-top: 2px;
  margin-right: 2px;
}

.toggles button {
  height: 19px;
  padding: 0 5px 0 2px;
  display: flex;
  align-items: center;
  gap: 3px;
  border: 1px solid transparent;
}

.toggles .on {
  background: #cbe1f9;
  border-color: #6aa8ea;
}

/* feedback tip under the chat icon */
.tip {
  position: absolute;
  z-index: 5;
  top: 47px;
  right: 36px;
  width: 180px;
  height: 78px;
  padding: 8px 11px;
  background: #61a3ee;
  color: #fff;
  border-radius: 4px;
  box-shadow: 2px 3px 4px rgba(0, 0, 0, 0.25);
  line-height: 18px;
}

.tip::before {
  content: "";
  position: absolute;
  right: 18px;
  top: -6px;
  border: 6px solid transparent;
  border-top: none;
  border-bottom-color: #61a3ee;
}

.tip button {
  display: block;
  width: 53px;
  height: 18px;
  margin-top: 6px;
  background: #fff;
  color: #4a97ec;
  border-radius: 3px;
}

.tip svg {
  position: absolute;
  right: 13px;
  bottom: 8px;
}

.selectors {
  height: 27px;
  padding: 2px 0;
  display: flex;
  gap: 2px;
  background: #c9ccd0;
  border-bottom: 1px solid #8b9095;
}

.selectors select {
  width: 100px;
  height: 22px;
  padding-left: 3px;
}

.selectors select:first-child {
  width: 97px;
  padding-left: 0;
  border-left: none;
}

/* work area */
main {
  flex: 1;
  min-height: 0;
  display: flex;
}

.grip {
  height: 12px;
  flex: none;
  background: #d2d4d9;
  border-bottom: 1px solid #c3c5c9;
  display: flex;
  justify-content: flex-end;
  padding-right: 4px;
}

.grip button {
  font-size: 14px;
  line-height: 12px;
  color: #777;
}

.thumb {
  position: absolute;
  width: 8px;
  border-radius: 4px;
  background: #cbcbcb;
}

.nav-panel {
  width: 205px;
  display: flex;
  flex-direction: column;
  border-right: 1px solid #c3c5c9;
}

.nav-panel h2 {
  height: 22px;
  flex: none;
  padding-left: 4px;
  line-height: 21px;
  color: #777;
  background: #efefef;
  border-bottom: 1px solid #c3c5c9;
}

.nav-tools {
  height: 32px;
  flex: none;
  display: flex;
  align-items: center;
  gap: 4px;
  padding: 0 1px 0 2px;
  background: #efefef;
  border-bottom: 1px solid #c3c5c9;
}

.nav-tools .add {
  margin-right: auto;
}

.framed {
  width: 22px;
  height: 24px;
  display: flex;
  align-items: center;
  justify-content: center;
  background: #e3f1ff;
  border: 1px solid #4f9bee;
  border-radius: 4px;
}

.nav-scroll {
  flex: 1;
  min-height: 0;
  overflow: hidden;
  position: relative;
}

.nav-scroll .thumb {
  right: 3px;
  top: 68px;
  height: 542px;
}

.nav-tree li {
  height: 21px;
  margin: 3px 20px 3px 44px;
  padding-left: 3px;
  display: flex;
  align-items: center;
  gap: 6px;
  white-space: nowrap;
}

.nav-tree .cat {
  margin-left: 0;
  padding-left: 0;
  gap: 7px;
}

.nav-tree svg {
  width: 16px;
  height: 16px;
}

.nav-tree .selected {
  background: #c9d9f0;
}

.side {
  width: 280px;
  margin-left: 4px;
  display: flex;
  flex-direction: column;
  gap: 4px;
}

.box {
  display: flex;
  flex-direction: column;
  border: 1px solid #b5b8bd;
  border-top: none;
}

.components {
  height: 408px;
  flex: none;
}

.props {
  flex: 1;
  min-height: 0;
}

.panel-tabs {
  height: 23px;
  flex: none;
  display: flex;
  background: #efefef;
  border-bottom: 1px solid #c3c5c9;
}

.panel-tabs button {
  width: 65px;
  color: #808080;
  background: #e1e1e1;
  border-right: 1px solid #c3c5c9;
}

.panel-tabs .active {
  color: #222;
  font-weight: bold;
  background: #efefef;
}

.tools {
  height: 31px;
  flex: none;
  display: flex;
  align-items: center;
  gap: 12px;
  padding: 0 4px 0 4px;
  background: #efefef;
  border-bottom: 1px solid #c3c5c9;
}

.tools button {
  display: flex;
  align-items: center;
  gap: 3px;
  color: #222;
}

.tools .overflow {
  margin-left: auto;
}

.find {
  height: 20px;
  flex: none;
  display: flex;
  align-items: center;
  padding: 0 7px 0 2px;
  color: #3c9bc8;
  border-bottom: 2px solid #d5d7da;
}

.find input {
  flex: 1;
}

.find input::placeholder {
  color: #888;
}

.comp-tree {
  flex: 1;
  padding-top: 1px;
}

.comp-tree li {
  height: 24px;
  display: flex;
  align-items: center;
}

.comp-tree i {
  width: 6px;
  height: 6px;
  margin-right: 9px;
  background: linear-gradient(135deg, transparent 50%, #444 50%);
}

.comp-tree .l1 { padding-left: 12px; }
.comp-tree .l2 { padding-left: 36px; }
.comp-tree .l3 { padding-left: 72px; }

.comp-tree span {
  padding: 2px 0 2px 3px;
}

.comp-tree .picked {
  width: 43px;
  background: #b3cbec;
}

.prop-scroll {
  flex: 1;
  min-height: 0;
  overflow: hidden;
  position: relative;
}

.prop-scroll .thumb {
  right: 3px;
  top: 14px;
  height: 172px;
}

table {
  width: 262px;
  table-layout: fixed;
  border-collapse: separate;
  border-spacing: 0;
}

th, td {
  height: 21px;
  padding: 0 0 0 3px;
  line-height: 17px;
  border-right: 1px solid #cfcfcf;
  border-bottom: 1px solid #cfcfcf;
  font-weight: normal;
  text-align: left;
  white-space: nowrap;
}

th {
  padding: 0;
  background: #efefef;
  color: #333;
  text-align: center;
}

th:nth-child(1) { width: 22px; }
th:nth-child(2) { width: 101px; }

td:first-child {
  padding: 0;
  text-align: center;
  background: #efefef;
  color: #333;
}

td:nth-child(2) {
  color: #1a5cf0;
}

td.dark {
  color: #000;
}

td svg {
  display: inline-block;
  width: 10px;
  height: 10px;
  margin: 0 1px;
  vertical-align: 1px;
}

.splitter {
  width: 4px;
  display: flex;
  align-items: flex-start;
}

.splitter button {
  width: 4px;
  height: 100px;
  margin-top: 367px;
  background: #5f6b78;
}

.splitter i {
  display: block;
  width: 0;
  border: 3px solid transparent;
  border-left: none;
  border-right-color: #dde1e5;
}

/* drawing area */
.canvas {
  flex: 1;
  min-width: 0;
  position: relative;
  overflow: hidden;
  background: #000;
}

.axis {
  fill: none;
  stroke: #004800;
  stroke-width: 2;
}

.axis-thin {
  fill: none;
  stroke: #087808;
}

.label {
  fill: #fff;
  font-family: "Noto Sans CJK SC", sans-serif;
  font-size: 18px;
}

.label .note {
  font-size: 17px;
}

.axis-name {
  font-family: "Noto Sans CJK SC", sans-serif;
  font-size: 16px;
}

.marks {
  position: absolute;
  top: 0;
  left: 0;
  pointer-events: none;
}

.dialog {
  position: absolute;
  top: 64px;
  right: 5px;
  width: 752px;
  background: #f0f0f0;
  border: 1px solid #a8b4c4;
  border-top: none;
}

.dialog-title {
  height: 27px;
  padding: 0 8px 0 7px;
  display: flex;
  align-items: center;
  gap: 18px;
  color: #fff;
  background: #2c7fe0;
}

.dialog-title h2 {
  margin-right: auto;
}

.dialog-body {
  position: relative;
  padding: 12px 11px 11px;
}

fieldset {
  min-width: 0;
  margin: 0;
  padding: 0 11px;
  border: 1px solid #e0e0e0;
  box-shadow: inset -1px -1px 0 #fff, 1px 1px 0 #fff;
}

legend {
  margin-left: -4px;
  padding: 0 2px;
}

.top-row {
  display: flex;
  gap: 8px;
}

.kind {
  width: 200px;
  height: 61px;
  display: flex;
  gap: 12px;
}

.kind label {
  display: flex;
  align-items: center;
  gap: 8px;
  height: 24px;
  margin-top: 9px;
  white-space: nowrap;
}

.kind input {
  width: 12px;
  height: 12px;
  appearance: none;
  border: 1px solid #bbb;
  border-radius: 50%;
}

.kind input:checked {
  background: #bbb;
  box-shadow: inset 0 0 0 2px #f0f0f0;
}

.names {
  flex: 1;
  display: grid;
  grid-template-columns: 86px 1fr;
  grid-auto-rows: 26px;
  row-gap: 8px;
  align-items: center;
}

.names select {
  height: 26px;
  padding-left: 3px;
}

.machine {
  height: 191px;
  margin-top: 7px;
}

.formulas {
  position: relative;
  height: 150px;
  margin-top: 12px;
  padding: 4px 4px 0;
  overflow: hidden;
  white-space: nowrap;
  background: #fff;
  border: 1px solid #777;
}

.formulas .thumb {
  top: 14px;
  right: 3px;
  height: 83px;
}

.manual {
  height: 126px;
  margin-top: 7px;
}

.manual textarea {
  display: block;
  width: 100%;
  height: 50px;
  margin-top: 12px;
  resize: none;
  background: #fff;
  border: 1px solid #777;
}

.result {
  display: flex;
  align-items: center;
  margin-top: 7px;
}

.result button {
  width: 100px;
}

.result button, .actions button {
  height: 28px;
  border: 1px solid #bdbdbd;
}

.result label {
  margin: 0 7px 0 27px;
}

.result input {
  flex: 1;
  height: 21px;
  background: #f9ede3;
  border: 1px solid #ddd;
}

.actions {
  display: flex;
  gap: 7px;
  margin-top: 7px;
}

.actions button {
  width: 140px;
}

.size-grip {
  position: absolute;
  right: 1px;
  bottom: 2px;
}

/* network speed widget */
.speed {
  position: absolute;
  top: 441px;
  right: -16px;
  width: 134px;
  height: 50px;
  padding: 7px 0 0 14px;
  border-radius: 25px;
  background: #fff;
  box-shadow: 0 2px 6px rgba(0, 0, 0, 0.3);
  font-size: 11px;
  color: #666;
}

.speed p {
  height: 18px;
  display: flex;
  align-items: center;
  gap: 3px;
  font-size: 11px;
}

.speed p span {
  margin-left: 4px;
}

.dial {
  position: absolute;
  top: -8px;
  right: -1px;
  width: 66px;
  height: 66px;
  padding-left: 12px;
  display: flex;
  align-items: center;
  border-radius: 50%;
  background: #fff;
  box-shadow: 0 0 4px rgba(0, 0, 0, 0.3);
  color: #111;
}

.dial svg {
  position: absolute;
  inset: 0;
}

.dial strong {
  font-size: 27px;
  font-weight: normal;
}

.dial small {
  margin-top: 6px;
  font-size: 11px;
}

.dock {
  position: absolute;
  right: 0;
  bottom: 0;
  width: 150px;
  height: 3px;
  background: #fff;
  border-top: 1px solid #9cb8ea;
}

.dock span {
  position: absolute;
  left: -20px;
  top: -8px;
  width: 42px;
  height: 42px;
  border-radius: 50%;
  background: #2f80f8;
}
```
